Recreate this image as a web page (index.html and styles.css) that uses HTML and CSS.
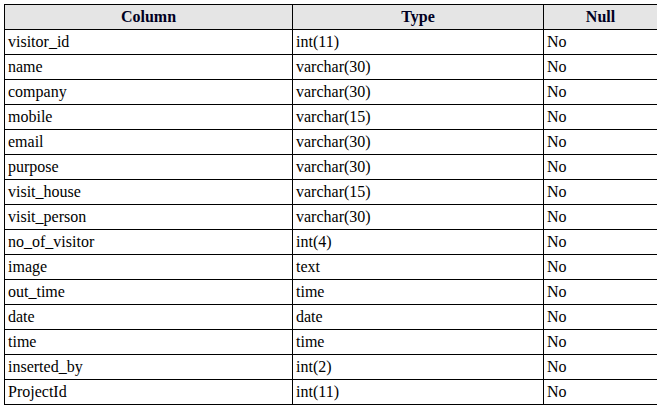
FILE: index.html
```html
<!DOCTYPE html>
<html>
<head>
<meta charset="utf-8">
<link rel="stylesheet" href="styles.css">
</head>
<body>
<table class="schema">
<colgroup><col class="c1"><col class="c2"><col class="c3"></colgroup>
<thead>
<tr><th>Column</th><th>Type</th><th>Null</th></tr>
</thead>
<tbody>
<tr><td>visitor_id</td><td>int(11)</td><td>No</td></tr>
<tr><td>name</td><td>varchar(30)</td><td>No</td></tr>
<tr><td>company</td><td>varchar(30)</td><td>No</td></tr>
<tr><td>mobile</td><td>varchar(15)</td><td>No</td></tr>
<tr><td>email</td><td>varchar(30)</td><td>No</td></tr>
<tr><td>purpose</td><td>varchar(30)</td><td>No</td></tr>
<tr><td>visit_house</td><td>varchar(15)</td><td>No</td></tr>
<tr><td>visit_person</td><td>varchar(30)</td><td>No</td></tr>
<tr><td>no_of_visitor</td><td>int(4)</td><td>No</td></tr>
<tr><td>image</td><td>text</td><td>No</td></tr>
<tr><td>out_time</td><td>time</td><td>No</td></tr>
<tr><td>date</td><td>date</td><td>No</td></tr>
<tr><td>time</td><td>time</td><td>No</td></tr>
<tr><td>inserted_by</td><td>int(2)</td><td>No</td></tr>
<tr><td>ProjectId</td><td>int(11)</td><td>No</td></tr>
</tbody>
</table>
</body>
</html>
```
FILE: styles.css
```css
html, body {
  margin: 0;
  background: #fff;
}
body {
  padding: 4px 0 0 4px;
  font-family: "Liberation Serif", "Times New Roman", serif;
  font-size: 16px;
  color: #000;
}
.schema {
  border-collapse: collapse;
  table-layout: fixed;
  width: 653px;
}
.c1 { width: 288px; }
.c2 { width: 251px; }
.c3 { width: 114px; }
.schema th,
.schema td {
  border: 1px solid #000;
  height: 25px;
  padding: 0 3px;
  line-height: 18px;
  box-sizing: border-box;
  vertical-align: middle;
}
.schema th {
  background: #e5e5e5;
  color: #000022;
  font-weight: bold;
  text-align: center;
}
.schema td {
  text-align: left;
}
```
